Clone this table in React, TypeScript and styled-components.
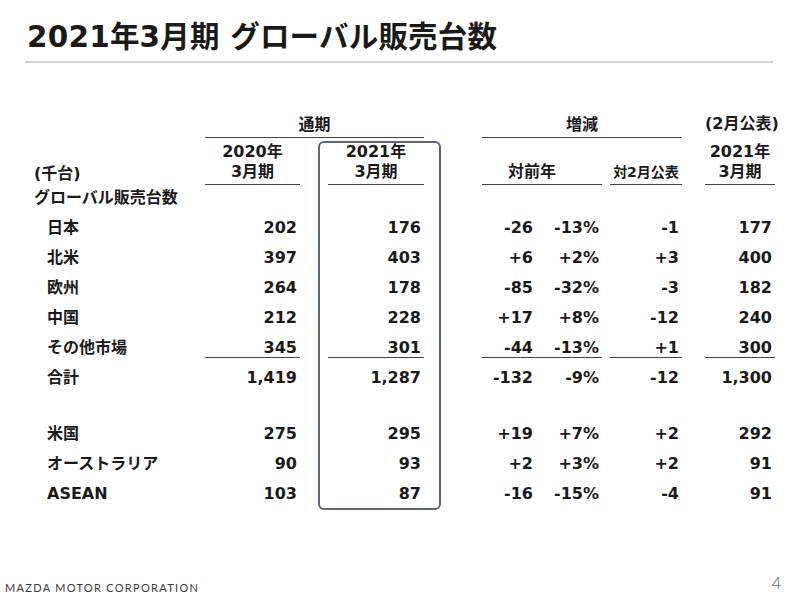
import * as React from 'react';
import styled, { createGlobalStyle } from 'styled-components';

const GlobalStyle = createGlobalStyle`
  body {
    margin: 0;
    background: #ffffff;
    font-family: "DejaVu Sans", "Noto Sans CJK JP", sans-serif;
    color: #1a1a1a;
  }
`;

const COLS =
  '[l] 171px [a] 95px [ga] 28px [b] 96px [gb] 58px [c] 54px [p] 66px [gp] 8px [d] 72px [gd] 23px [e] 70px [end]';

const Page = styled.div`
  width: 800px;
  height: 600px;
  display: flex;
  flex-direction: column;
  overflow: hidden;
`;

const Title = styled.h1`
  margin: 19px 0 0 27px;
  font-size: 29.5px;
  line-height: 36px;
  font-weight: 700;
  letter-spacing: 0.2px;
`;

const TitleRule = styled.div`
  margin: 6px 27px 0 25px;
  height: 2px;
  background: #d2d2d2;
`;

const Table = styled.div`
  position: relative;
  margin: 49px 0 0 34px;
  font-size: 16px;
  font-weight: 700;
`;

const Row = styled.div<{ $h: number }>`
  display: grid;
  grid-template-columns: ${COLS};
  grid-template-rows: ${(p) => p.$h}px;
  height: ${(p) => p.$h}px;
`;

const Head = styled.div<{ $col: string; $line?: boolean; $small?: boolean; $shift?: number }>`
  grid-column: ${(p) => p.$col};
  align-self: end;
  box-sizing: border-box;
  text-align: center;
  white-space: nowrap;
  padding-right: ${(p) => p.$shift ?? 0}px;
  line-height: 20px;
  padding-bottom: ${(p) => (p.$line ? 2 : 3)}px;
  font-size: ${(p) => (p.$small ? 14 : 16)}px;
  border-bottom: 1px solid ${(p) => (p.$line ? '#444' : 'transparent')};
`;

const HeadLabel = styled.div<{ $pad?: number }>`
  grid-column: l;
  align-self: end;
  line-height: 20px;
  white-space: nowrap;
  padding-bottom: ${(p) => p.$pad ?? 0}px;
`;

const Label = styled.div`
  grid-column: l;
  padding-left: 13px;
  line-height: 30px;
  white-space: nowrap;
`;

const Num = styled.div<{ $col: string; $line?: boolean }>`
  grid-column: ${(p) => p.$col};
  text-align: right;
  padding-right: 3px;
  white-space: nowrap;
  box-sizing: border-box;
  ${(p) =>
    p.$line
      ? `align-self: start; height: 25px; padding-top: 6px; line-height: 18px; border-bottom: 1px solid #444;`
      : `line-height: 30px;`}
`;

const Highlight = styled.div`
  position: absolute;
  left: 284px;
  top: 29px;
  width: 123px;
  height: 369px;
  box-sizing: border-box;
  border: 2px solid #5b6480;
  border-radius: 6px;
  pointer-events: none;
`;

const Spacer = styled.div<{ $h: number }>`
  height: ${(p) => p.$h}px;
`;

const Footer = styled.div`
  margin-top: auto;
  display: flex;
  justify-content: space-between;
  align-items: flex-end;
  padding: 0 19px 5px 5px;
`;

const Company = styled.div`
  font-family: Lato, "Open Sans", sans-serif;
  font-weight: 400;
  font-size: 11px;
  line-height: 14px;
  letter-spacing: 1.3px;
  color: #3a3a3a;
`;

const PageNo = styled.div`
  font-family: "Open Sans", Lato, sans-serif;
  font-weight: 300;
  font-size: 16px;
  line-height: 20px;
  margin-bottom: 2px;
  color: #666;
`;

type Line = { name: string; v: string[]; line?: boolean };

const top: Line[] = [
  { name: '日本', v: ['202', '176', '-26', '-13%', '-1', '177'] },
  { name: '北米', v: ['397', '403', '+6', '+2%', '+3', '400'] },
  { name: '欧州', v: ['264', '178', '-85', '-32%', '-3', '182'] },
  { name: '中国', v: ['212', '228', '+17', '+8%', '-12', '240'] },
  { name: 'その他市場', v: ['345', '301', '-44', '-13%', '+1', '300'], line: true },
  { name: '合計', v: ['1,419', '1,287', '-132', '-9%', '-12', '1,300'] },
];

const bottom: Line[] = [
  { name: '米国', v: ['275', '295', '+19', '+7%', '+2', '292'] },
  { name: 'オーストラリア', v: ['90', '93', '+2', '+3%', '+2', '91'] },
  { name: 'ASEAN', v: ['103', '87', '-16', '-15%', '-4', '91'] },
];

const cols = ['a', 'b', 'c', 'p', 'd', 'e'];

const DataRow: React.FC<{ item: Line }> = ({ item }) => (
  <Row $h={30}>
    <Label>{item.name}</Label>
    {item.v.map((val, i) => (
      <Num key={i} $col={cols[i]} $line={item.line}>
        {val}
      </Num>
    ))}
  </Row>
);

const App: React.FC = () => {
  return (
    <Page>
      <GlobalStyle />
      <Title>2021年3月期 グローバル販売台数</Title>
      <TitleRule />

      <Table>
        <Row $h={26}>
          <Head $col="a / gb" $line>通期</Head>
          <Head $col="c / gd" $line>増減</Head>
          <Head $col="e">(2月公表)</Head>
        </Row>
        <Row $h={47}>
          <HeadLabel $pad={1}>(千台)</HeadLabel>
          <Head $col="a" $line>2020年<br />3月期</Head>
          <Head $col="b" $line>2021年<br />3月期</Head>
          <Head $col="c / gp" $line $shift={20}>対前年</Head>
          <Head $col="d" $line $small>対2月公表</Head>
          <Head $col="e" $line>2021年<br />3月期</Head>
        </Row>
        <Row $h={28}>
          <HeadLabel $pad={5}>グローバル販売台数</HeadLabel>
        </Row>

        {top.map((item) => (
          <DataRow key={item.name} item={item} />
        ))}
        <Spacer $h={26} />
        {bottom.map((item) => (
          <DataRow key={item.name} item={item} />
        ))}

        <Highlight />
      </Table>

      <Footer>
        <Company>MAZDA MOTOR CORPORATION</Company>
        <PageNo>4</PageNo>
      </Footer>
    </Page>
  );
};

export default App;
